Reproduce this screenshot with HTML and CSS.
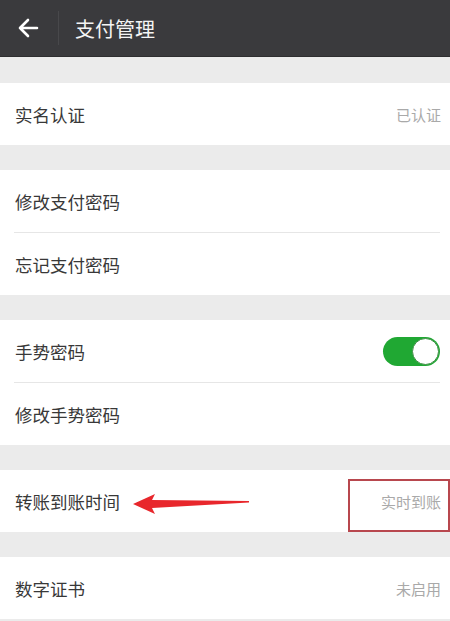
FILE: index.html
```html
<!DOCTYPE html>
<html lang="zh-CN">
<head>
<meta charset="utf-8">
<title>支付管理</title>
<link rel="stylesheet" href="styles.css">
</head>
<body>
<header class="bar">
  <span class="back">
    <svg width="22" height="20" viewBox="0 0 22 20"><path d="M20 10H3M11 2L3 10l8 8" fill="none" stroke="#fff" stroke-width="2.6" stroke-linecap="round" stroke-linejoin="round"/></svg>
  </span>
  <span class="sep"></span>
  <h1 class="title">支付管理</h1>
</header>

<section class="group first">
  <div class="row"><span class="label">实名认证</span><span class="value">已认证</span></div>
</section>

<section class="group">
  <div class="row"><span class="label">修改支付密码</span></div>
  <div class="divider"></div>
  <div class="row"><span class="label">忘记支付密码</span></div>
</section>

<section class="group">
  <div class="row"><span class="label">手势密码</span><span class="switch"><span class="knob"></span></span></div>
  <div class="divider"></div>
  <div class="row"><span class="label">修改手势密码</span></div>
</section>

<section class="group">
  <div class="row annotated">
    <span class="label">转账到账时间</span><span class="value">实时到账</span>
    <svg class="red-arrow" width="118" height="22" viewBox="0 0 118 22"><polygon points="0,11 22,1 19,7 116,8 116,9.5 19,15 22,21" fill="#e8272c"/></svg>
    <span class="red-box"></span>
  </div>
</section>

<section class="group">
  <div class="row"><span class="label">数字证书</span><span class="value">未启用</span></div>
</section>
</body>
</html>
```

FILE: styles.css
```css
html, body {
  margin: 0;
  padding: 0;
}
body {
  background: #ebebeb;
  font-family: "Noto Sans CJK SC", "Noto Sans", sans-serif;
  width: 450px;
  height: 621px;
  overflow: hidden;
}
.bar {
  height: 57px;
  background: #3a3a3d;
  display: flex;
  align-items: center;
  border-bottom: 1px solid #2e2e30;
  box-sizing: border-box;
}
.back {
  width: 58px;
  display: flex;
  justify-content: center;
  box-sizing: border-box;
}
.back svg {
  display: block;
  margin-left: -3px;
}
.sep {
  width: 1px;
  height: 34px;
  background: #48484b;
}
.title {
  margin: 0 0 0 16px;
  font-size: 20px;
  font-weight: normal;
  color: #f4f4f4;
}
.group {
  background: #fff;
  margin-top: 25px;
}
.group.first {
  margin-top: 26px;
}
.row {
  height: 62px;
  display: flex;
  align-items: center;
  justify-content: space-between;
  padding: 0 9px 0 15px;
  box-sizing: border-box;
}
.label {
  font-size: 17.5px;
  color: #383838;
}
.value {
  font-size: 15px;
  color: #a9a9a9;
}
.divider {
  height: 1px;
  background: #e6e6e6;
  margin: 0 10px 0 14px;
}
.switch {
  width: 57px;
  height: 29px;
  border-radius: 15px;
  background: #20a833;
  display: flex;
  align-items: center;
  justify-content: flex-end;
  padding: 1px;
  box-sizing: border-box;
  margin-right: 1px;
}
.knob {
  width: 27px;
  height: 27px;
  border-radius: 50%;
  background: #fff;
  box-sizing: border-box;
  border: 1px solid #3f8f46;
}
.annotated {
  position: relative;
}
.red-arrow {
  position: absolute;
  left: 133px;
  top: 23px;
}
.red-box {
  position: absolute;
  left: 348px;
  top: 9px;
  width: 102px;
  height: 53px;
  border: 2px solid #b8474e;
  box-sizing: border-box;
}
```
